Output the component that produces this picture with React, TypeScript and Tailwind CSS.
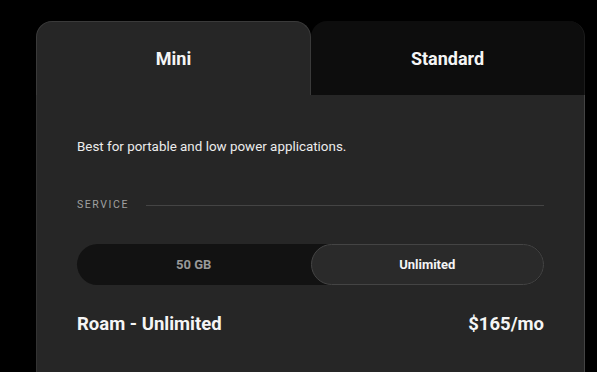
import React from "react";

export default function App() {
  return (
    <div
      className="w-[597px] h-[372px] overflow-hidden bg-black pt-[21px] pl-[36px]"
      style={{ fontFamily: "Roboto, 'Liberation Sans', sans-serif" }}
    >
      <div className="w-[549px]">
        <div className="grid grid-cols-[275px_274px] h-[74px]">
          <div className="flex items-center justify-center rounded-t-[16px] border border-b-0 border-[#3a3a3a] bg-[#262626] text-[18px] font-bold text-[#f5f5f5]">
            Mini
          </div>
          <div className="flex items-center justify-center rounded-t-[16px] bg-[#0d0d0d] border-r border-[#1c1c1c] text-[18px] font-bold text-[#f5f5f5]">
            Standard
          </div>
        </div>
        <div className="h-[300px] border-x border-l-[#333333] border-r-[#444444] bg-[#262626] px-[40px] pt-[42px]">
          <p className="text-[13.4px] leading-[20px] text-[#ececec]">
            Best for portable and low power applications.
          </p>
          <div className="mt-[40px] flex h-[16px] items-center gap-[17px]">
            <span className="text-[10.5px] tracking-[0.15em] text-[#a0a0a0]">SERVICE</span>
            <div className="h-px flex-1 bg-[#444444]" />
          </div>
          <div className="mt-[31px] grid h-[41px] grid-cols-2 rounded-full bg-[#121212]">
            <button className="flex items-center justify-center text-[13px] font-bold text-[#999999]">
              50 GB
            </button>
            <button className="flex items-center justify-center rounded-full border border-[#444444] bg-[#2a2a2a] text-[13px] font-bold text-[#f5f5f5]">
              Unlimited
            </button>
          </div>
          <div className="mt-[28px] flex h-[24px] items-center justify-between text-[18.5px] font-bold text-[#f5f5f5]">
            <span>Roam - Unlimited</span>
            <span>$165/mo</span>
          </div>
        </div>
      </div>
    </div>
  );
}
